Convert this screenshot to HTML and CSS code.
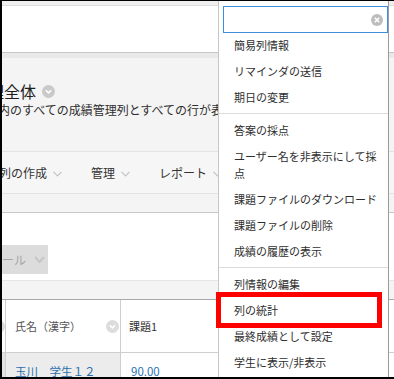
FILE: index.html
```html
<!DOCTYPE html>
<html lang="ja">
<head>
<meta charset="utf-8">
<title>成績管理</title>
<link rel="stylesheet" href="styles.css">
</head>
<body>
<div class="frame">
  <div class="topstrip"></div>
  <div class="header"></div>
  <div class="subband"></div>
  <section class="titlearea">
    <h1 class="title"><span class="title-text">理全体</span><svg class="circ" width="13" height="13" viewBox="0 0 13 13"><circle cx="6.5" cy="6.5" r="6.5" fill="#c9c9c9"/><polyline points="3.8,5.2 6.5,7.9 9.2,5.2" fill="none" stroke="#fff" stroke-width="1.6"/></svg></h1>
    <p class="desc">内のすべての成績管理列とすべての行が表示されます。</p>
  </section>
  <nav class="nav">
    <span class="nav-item first">列の作成<svg class="chev" width="9" height="6" viewBox="0 0 9 6"><polyline points="0.5,0.8 4.5,4.8 8.5,0.8" fill="none" stroke="#c4c4c4" stroke-width="1.2"/></svg></span>
    <span class="nav-item">管理<svg class="chev" width="9" height="6" viewBox="0 0 9 6"><polyline points="0.5,0.8 4.5,4.8 8.5,0.8" fill="none" stroke="#c4c4c4" stroke-width="1.2"/></svg></span>
    <span class="nav-item">レポート<svg class="chev" width="9" height="6" viewBox="0 0 9 6"><polyline points="0.5,0.8 4.5,4.8 8.5,0.8" fill="none" stroke="#c4c4c4" stroke-width="1.2"/></svg></span>
  </nav>
  <div class="navstrip"></div>
  <div class="toolbar">
    <button class="tool-btn">ール<svg class="btn-chev" width="11" height="8" viewBox="0 0 11 8"><polyline points="1,1 5.5,6 10,1" fill="none" stroke="#c6c6c6" stroke-width="2"/></svg></button>
  </div>
  <div class="tablestrip"></div>
  <div class="grid">
    <div class="grid-row head">
      <div class="cell c0"><svg class="circ part" width="13" height="13" viewBox="0 0 13 13"><circle cx="6.5" cy="6.5" r="6.5" fill="#dadada"/></svg></div>
      <div class="cell c1">氏名（漢字）<svg class="circ light" width="13" height="13" viewBox="0 0 13 13"><circle cx="6.5" cy="6.5" r="6.5" fill="#dcdcdc"/><polyline points="3.8,5.2 6.5,7.9 9.2,5.2" fill="none" stroke="#fff" stroke-width="1.6"/></svg></div>
      <div class="cell c2">課題1</div>
    </div>
    <div class="grid-row body">
      <div class="cell c0"></div>
      <div class="cell c1 name">玉川　学生１２</div>
      <div class="cell c2 score">90.00</div>
    </div>
  </div>

  <div class="menu">
    <div class="search">
      <svg class="clear" width="12" height="12" viewBox="0 0 12 12"><circle cx="6" cy="6" r="6" fill="#bdbdbd"/><path d="M3.8,3.8 L8.2,8.2 M8.2,3.8 L3.8,8.2" stroke="#fff" stroke-width="1.6"/></svg>
    </div>
    <ul class="menu-list">
      <li class="menu-item">簡易列情報</li>
      <li class="menu-item">リマインダの送信</li>
      <li class="menu-item">期日の変更</li>
      <li class="menu-sep"></li>
      <li class="menu-item">答案の採点</li>
      <li class="menu-item">ユーザー名を非表示にして採点</li>
      <li class="menu-item">課題ファイルのダウンロード</li>
      <li class="menu-item">課題ファイルの削除</li>
      <li class="menu-item">成績の履歴の表示</li>
      <li class="menu-sep"></li>
      <li class="menu-item">列情報の編集</li>
      <li class="menu-item">列の統計</li>
      <li class="menu-item">最終成績として設定</li>
      <li class="menu-item">学生に表示/非表示</li>
    </ul>
  </div>
  <div class="highlight"></div>
</div>
</body>
</html>
```

FILE: styles.css
```css
html, body {
  margin: 0;
  padding: 0;
  background: #fff;
}

.frame {
  width: 394px;
  height: 379px;
  box-sizing: border-box;
  border-top: 1px solid #000;
  border-left: 2px solid #000;
  border-bottom: 2px solid #000;
  position: relative;
  overflow: hidden;
  display: flex;
  flex-direction: column;
  background: #fff;
  font-family: "Noto Sans CJK JP", "Noto Sans", sans-serif;
  color: #333;
}

.topstrip {
  flex: none;
  height: 4px;
  background: #efefef;
  border-bottom: 1px solid #dddddd;
}

.header {
  flex: none;
  height: 46px;
  background: #fff;
  border-bottom: 1px solid #c6c6c6;
}

.subband {
  flex: none;
  height: 5px;
  background: #e9e9e9;
}

.titlearea {
  flex: none;
  height: 93px;
  box-sizing: border-box;
  background: #f4f4f4;
  padding-top: 23px;
  overflow: hidden;
}

.title {
  margin: 0 0 0 -14px;
  display: flex;
  align-items: center;
  gap: 6px;
  font-size: 16px;
  line-height: 20px;
  font-weight: normal;
  color: #1e1e1e;
  white-space: nowrap;
}

.circ {
  display: block;
  flex: none;
}

.desc {
  margin: 1px 0 0 -4px;
  font-size: 12px;
  line-height: 16px;
  color: #2e2e2e;
  white-space: nowrap;
}

.nav {
  flex: none;
  height: 41px;
  background: #f6f6f6;
  border-top: 1px solid #e3e3e3;
  border-bottom: 1px solid #e3e3e3;
  display: flex;
  align-items: center;
  gap: 29px;
  overflow: hidden;
  white-space: nowrap;
}

.nav-item {
  display: flex;
  align-items: center;
  gap: 6px;
  font-size: 12px;
  line-height: 16px;
  color: #333;
}

.nav-item.first {
  margin-left: -3px;
}

.chev {
  display: block;
  margin-top: 3px;
}

.navstrip {
  flex: none;
  height: 18px;
  background: #f4f4f4;
  border-bottom: 1px solid #c8c8c8;
}

.toolbar {
  flex: none;
  height: 67px;
  box-sizing: border-box;
  padding-top: 32px;
  background: #fff;
}

.tool-btn {
  display: flex;
  align-items: center;
  gap: 8px;
  height: 29px;
  width: 46px;
  margin: 0;
  padding: 0;
  border: none;
  background: #dcdcdc;
  font-family: "Noto Sans CJK JP", sans-serif;
  font-size: 12px;
  color: #a6a6a6;
}

.btn-chev {
  display: block;
}

.tablestrip {
  flex: none;
  height: 18px;
  background: #f4f4f4;
  border-top: 1px solid #e6e6e6;
  border-bottom: 1px solid #a9a9a9;
}

.grid {
  flex: none;
  display: flex;
  flex-direction: column;
}

.grid-row {
  display: flex;
}

.grid-row.head {
  height: 52px;
  border-bottom: 1px solid #cfcfcf;
  background: #fff;
}

.grid-row.body {
  height: 36px;
}

.cell {
  display: flex;
  align-items: center;
  box-sizing: border-box;
  font-size: 11px;
  line-height: 16px;
  white-space: nowrap;
  overflow: hidden;
}

.c0 {
  width: 4px;
  border-right: 1px solid #cfcfcf;
}

.c1 {
  width: 115px;
  border-right: 1px solid #cfcfcf;
  padding-left: 9px;
  padding-right: 1px;
  color: #555;
}

.c1 .circ {
  margin-left: auto;
}

.c2 {
  flex: 1;
  padding-left: 8px;
  color: #333;
}

.circ.part {
  margin-left: -10px;
}

.body .c0 {
  background: #e2e2e2;
}

.body .c1 {
  background: #ececec;
}

.name {
  color: #2b6fae;
  font-size: 11.5px;
}

.score {
  color: #2b72b8;
  padding-left: 10px;
  font-size: 11.5px;
}

/* dropdown menu overlay */
.menu {
  position: absolute;
  left: 216px;
  top: 0;
  bottom: 0;
  width: 171px;
  box-sizing: border-box;
  background: #fff;
  border-left: 1px solid #c6c6c6;
  border-right: 1px solid #9c9c9c;
  padding-top: 5px;
}

.search {
  margin-left: 4px;
  height: 27px;
  box-sizing: border-box;
  border: 1px solid #3d8fdc;
  display: flex;
  align-items: center;
  justify-content: flex-end;
  padding-right: 4px;
}

.clear {
  display: block;
}

.menu-list {
  list-style: none;
  margin: 0;
  padding: 0;
}

.menu-item {
  padding: 4px 8px 5px 15px;
  font-size: 11px;
  line-height: 17px;
  color: #2e2e2e;
}

.menu-sep {
  height: 1px;
  background: #dcdcdc;
  margin: 2px 0 4px;
}

.highlight {
  position: absolute;
  left: 214px;
  top: 291px;
  width: 166px;
  height: 36px;
  box-sizing: border-box;
  border: 5px solid #ff0000;
}
```
